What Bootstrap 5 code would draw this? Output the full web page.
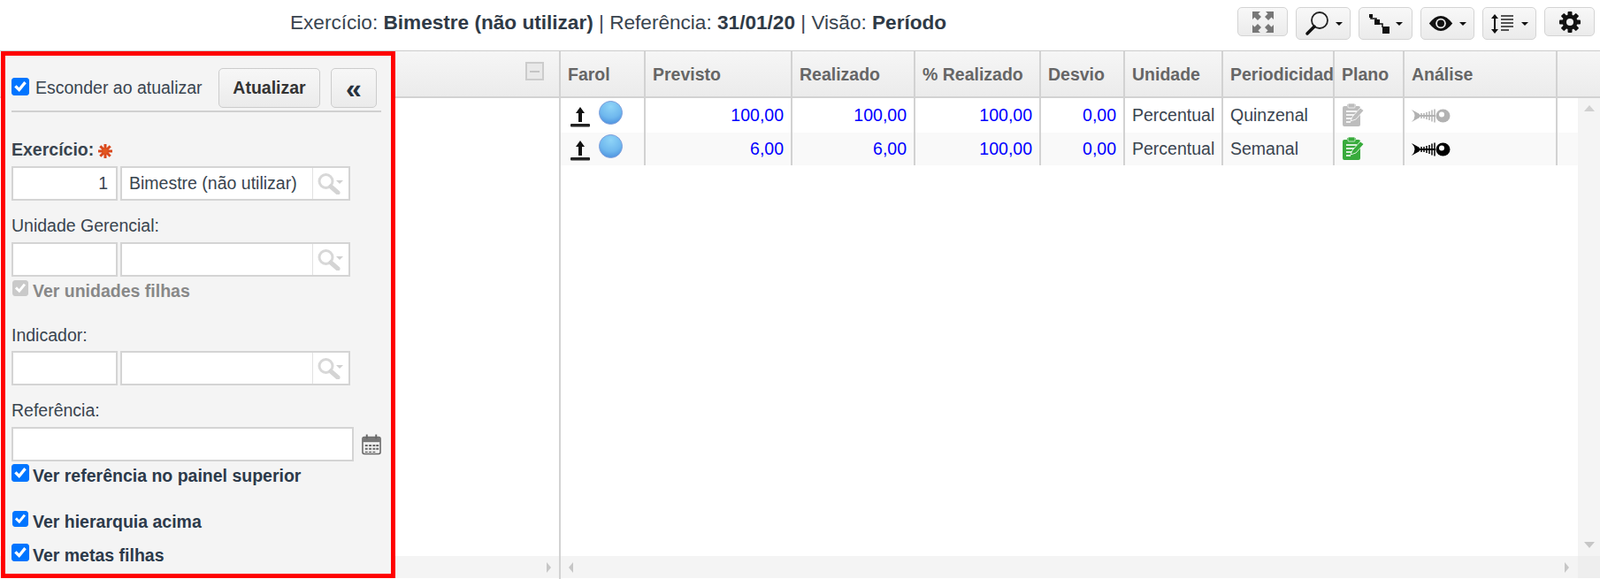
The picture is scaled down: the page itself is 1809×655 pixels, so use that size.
<!DOCTYPE html>
<html lang="pt">
<head>
<meta charset="utf-8">
<title>Painel</title>
<link rel="stylesheet" href="https://cdn.jsdelivr.net/npm/bootstrap@5.3.0/dist/css/bootstrap.min.css">
<style>
html,body{height:655px;overflow:hidden;margin:0;background:#fff}
body{font-family:"Liberation Sans",Arial,sans-serif;font-size:19.5px;color:#39444f;line-height:24px}
.topbar{height:57px;padding:8px 6px 0 328px}
.page-title{font-size:22.6px;line-height:36px}
.page-title b{color:#2f3a46}
.tools{gap:9px}
.tool-btn{height:33px;width:57px;padding:0;border:1px solid #d4d4d4;border-radius:5px;background:linear-gradient(#f8f8f8,#ebebeb);display:flex;align-items:center;justify-content:center;color:#111}
.tool-btn.tall{height:37px;width:61px}
.tool-btn.tall.wide{width:62px}
.tool-btn.dropdown-toggle::after{margin-left:7px;border-top:4px solid #111;border-left:4px solid transparent;border-right:4px solid transparent;border-bottom:0;vertical-align:middle}
.workspace{height:598px;position:relative;border-top:1px solid #ccc}
.tree-pane{width:634px;border-right:2px solid #d2d2d2}
.grid-pane{width:1175px}
.head-bar{height:53px;background:linear-gradient(#f6f6f6,#ebebeb);border-bottom:2px solid #d2d2d2}
.collapse-box{width:21px;height:21px;border:2px solid #ccc;background:#e9e9e9;margin:12px 17px 0 auto;display:flex;align-items:center;justify-content:center}
.collapse-box i{display:block;width:11px;height:2px;background:#c4c4c4}
.tree-body{flex:1}
.scroll-h{height:25px;background:#f4f4f4;margin-bottom:1px;display:flex;align-items:center}
.tree-scroll{justify-content:flex-end;padding-right:9px}
.grid-scroll{justify-content:space-between;padding:0 10px 0 9px;flex:1}
.scroll-corner{width:25px;height:25px;background:#eee;margin-bottom:1px}
.arrow-l,.arrow-r{display:block;width:0;height:0;border-top:6px solid transparent;border-bottom:6px solid transparent}
.arrow-l{border-right:5px solid #c6c6c6}
.arrow-r{border-left:5px solid #c6c6c6}
.grid-table{table-layout:fixed;margin:0;border-collapse:collapse}
.head-table{width:1175px}
.body-table{width:1150px}
.grid-table>*>tr>*{padding:0 8px;border:0;border-right:2px solid #d2d2d2;background:transparent;white-space:nowrap;overflow:visible;box-shadow:none}
.head-table th{height:51px;font-weight:700;color:#666;vertical-align:middle;font-size:19.5px}
.head-table th:last-child{border-right:0}
.body-table td{vertical-align:middle;color:#39444f}
.body-table tr.line-a td{height:39px;padding-bottom:2px}
.body-table tr.line-b td{height:37px;padding-bottom:2px;background:#f9f9f9}
.body-table td.num{text-align:right;color:#00f}
.body-table td.bare{border-right:0}
.c1{width:95px}.c2{width:166px}.c3{width:139px}.c4{width:142px}.c5{width:95px}.c6{width:111px}.c7{width:126px}.c8{width:79px}.c9{width:173px}
.cl-head{width:49px}.cl-body{width:24px}
.vscroll{width:25px;background:#f4f4f4;flex-direction:column;justify-content:space-between;padding:8px 0 9px}
.arrow-u,.arrow-d{display:block;width:0;height:0;margin-left:7px;border-left:6px solid transparent;border-right:6px solid transparent}
.arrow-u{border-bottom:7px solid #d0d0d0}
.arrow-d{border-top:7px solid #c6c6c6}
.farol-cell{display:flex;align-items:flex-start;gap:10px;margin-left:3px}
.farol-a{margin-top:7px}
.sphere{width:27px;height:27px;border-radius:50%;background:radial-gradient(circle at 50% 22%,#8fd4f7 0,#6fb8ee 55%,#3f82d8 100%);border:1px solid #7f9fdc}
.filter-panel{position:absolute;left:1px;top:0;width:446px;height:596px;border:5px solid #f00;background:#f4f4f4;padding:14px 11px 0 7px;z-index:5}
.filter-top{height:45px;padding-right:5px}
.filter-top .form-check-input{margin:-4px 7px 0 0}
.filter-top label{margin-top:-2px}
.act-btn{height:45px;width:115px;padding:0;font-size:19.5px;font-weight:700;color:#333;border:1px solid #ccc;border-radius:5px;background:linear-gradient(#f7f7f7,#ebebeb)}
.act-btn.arrows{width:52px;margin-left:12px;font-size:32px;line-height:38px;color:#27323e}
.filter-rule{height:2px;margin-top:3px;background:#d0d0d0}
.f-label{height:24px;margin-bottom:7px}
.ml-30{margin-top:30px}.ml-16{margin-top:16px}.ml-26{margin-top:26px}
.f-label.tight{margin-bottom:6px}
.f-label.ref-label{margin-bottom:7px}
.pair{gap:3px;height:39px}
.form-control.cod,.form-control.desc,.form-control.dt{height:39px;border:2px solid #d4d4d4;border-radius:0;background:#fff;font-size:19.5px;color:#39444f;padding:0 9px;box-shadow:none}
.form-control.cod{width:120px;flex:none;text-align:right}
.desc-wrap{width:260px;border:2px solid #d4d4d4;background:#fff;height:39px}
.form-control.desc{border:0;height:35px;flex:1;min-width:0;padding-left:8px}
.find-cell{width:41px;flex:none;border-left:1px solid #e2e2e2;padding-left:5px;display:flex;align-items:center}
.form-control.dt{width:387px;flex:none}
.date-row{gap:9px}
.check-line{height:24px;font-weight:700;color:#2c3a4a}
.check-line .form-check-input{margin:0 4px 0 0;flex:none}
.check-line.up .form-check-input{margin-top:-1px;align-self:flex-start}
.check-line.small-box .form-check-input{width:18px;height:18px;margin:0 5px 0 1px;align-self:flex-start}
.form-check-input{width:20px;height:20px;margin:0}
.form-check-input[type=checkbox]{border-radius:3px}
.form-check-input:checked{background-color:#0075ff;border-color:#0075ff}
.form-check-input:checked[type=checkbox]{--bs-form-check-bg-image:url("data:image/svg+xml,%3csvg xmlns='http://www.w3.org/2000/svg' viewBox='0 0 20 20'%3e%3cpath fill='none' stroke='%23fff' stroke-linecap='square' stroke-width='3.6' d='M5 10.500l3.500 3.500 6.500-8'/%3e%3c/svg%3e")}
.form-check-input:disabled{opacity:1;pointer-events:none}
.form-check-input:checked:disabled{background-color:#c9c9c9;border-color:#c9c9c9}
.check-off{color:#888}
.ck-4{margin-top:4px}.ck-a{margin-top:4px}.ck-b{margin-top:28px}.ck-c{margin-top:14px}
.req{margin-left:5px;vertical-align:-3px}
.text-plan-off{color:#bdbdbd}.text-plan-on{color:#38ab3c}.text-fish-off{color:#b2b2b2}.text-fish-on{color:#000}
</style>
</head>
<body>
<svg width="0" height="0" class="position-absolute">
<defs>
<symbol id="find" viewBox="0 0 30 24"><circle cx="9.500" cy="9" r="7.500" fill="none" stroke="#d8d8d8" stroke-width="3"/><path d="M15 15l8 7" stroke="#d4d4d4" stroke-width="5" stroke-linecap="round"/><path d="M21 8h8l-4 4z" fill="#d0d0d0"/></symbol>
<symbol id="arrowup" viewBox="0 0 22 24"><path d="M11 0l5 7h-3v10H9V7H6z" fill="#111"/><rect x="0" y="19" width="22" height="3.500" rx="1" fill="#222"/></symbol>
<symbol id="plan" viewBox="0 0 25 27"><path d="M3 4h3V2h10v2h3q2 0 2 2v19q0 2-2 2H3q-2 0-2-2V6q0-2 2-2z" fill="currentColor"/><rect x="7" y="1" width="8" height="5" rx="1" fill="currentColor" stroke="#fff" stroke-opacity=".7"/><path d="M5 10h12M5 14h9M5 18h6M5 22h5" stroke="#fff" stroke-opacity=".8" stroke-width="2"/><path d="M10 21l2-5L21 6l4 3-9 10z" fill="currentColor" stroke="#fff" stroke-opacity=".8"/></symbol>
<symbol id="fish" viewBox="0 0 44 18"><path d="M0 2q7 7 0 14l9-5V7z" fill="currentColor"/><path d="M7 9h20" stroke="currentColor" stroke-width="2"/><path d="M11 6v6M14 6v6M17 5v8M20 4v10M23 2.500v13M26 1.500v15" stroke="currentColor" stroke-width="1.500"/><ellipse cx="35.500" cy="9" rx="8" ry="7.500" fill="currentColor"/><circle cx="34" cy="7.500" r="3" fill="#fff"/></symbol>
</defs>
</svg>

<header class="topbar d-flex justify-content-between align-items-start">
  <div class="page-title">Exercício: <b>Bimestre (não utilizar)</b> | Referência: <b>31/01/20</b> | Visão: <b>Período</b></div>
  <div class="tools d-flex align-items-start">
    <button class="tool-btn" aria-label="Tela cheia"><svg width="24" height="24" viewBox="0 0 24 24" fill="#777"><path d="M0 0h9L6.500 2.500 10 6 6 10 2.500 6.500 0 9zM24 0v9l-2.500-2.500L18 10l-4-4 3.500-3.500L15 0zM0 24v-9l2.500 2.500L6 14l4 4-3.500 3.500L9 24zM24 24h-9l2.500-2.500L14 18l4-4 3.500 3.500L24 15z"/></svg></button>
    <button class="tool-btn tall wide dropdown-toggle" aria-label="Pesquisar"><svg width="28" height="30" viewBox="0 0 28 30"><circle cx="17" cy="11" r="9" fill="none" stroke="#222" stroke-width="1.800"/><path d="M11 18L3 26" stroke="#111" stroke-width="3.500" stroke-linecap="round"/></svg></button>
    <button class="tool-btn tall dropdown-toggle" aria-label="Hierarquia"><svg width="23" height="22" viewBox="0 0 23 22"><path d="M2 2v3h6v6h7v4" fill="none" stroke="#111" stroke-width="1.500"/><rect x="0" y="0" width="4" height="4" fill="#111"/><rect x="6" y="6" width="6" height="6" fill="#111"/><rect x="15" y="14" width="8" height="8" fill="#111"/></svg></button>
    <button class="tool-btn tall dropdown-toggle" aria-label="Visão"><svg width="28" height="19" viewBox="0 0 26 18"><path d="M0.500 9Q13-7 25.500 9 13 25 0.500 9z" fill="#111"/><circle cx="13" cy="9" r="5.500" fill="#eee"/><circle cx="13" cy="9" r="3.800" fill="#111"/></svg></button>
    <button class="tool-btn tall dropdown-toggle" aria-label="Altura"><svg width="28" height="24" viewBox="0 0 28 24"><path d="M5 1l4 5H6v12h3l-4 5-4-5h3V6H1z" fill="#111"/><path d="M12 3h14M12 7h14M12 11h14M12 15h14M12 19h9" stroke="#222" stroke-width="1.500"/></svg></button>
    <button class="tool-btn" aria-label="Configurações"><svg width="24" height="24" viewBox="0 0 24 24"><g fill="#111"><circle cx="12" cy="12" r="8.500"/><rect x="9.500" y="0" width="5" height="24" rx="1"/><rect x="9.500" y="0" width="5" height="24" rx="1" transform="rotate(45 12 12)"/><rect x="9.500" y="0" width="5" height="24" rx="1" transform="rotate(90 12 12)"/><rect x="9.500" y="0" width="5" height="24" rx="1" transform="rotate(135 12 12)"/></g><circle cx="12" cy="12" r="4" fill="#eee"/></svg></button>
  </div>
</header>

<main class="workspace d-flex">
  <aside class="filter-panel">
    <div class="filter-top d-flex align-items-center">
      <input class="form-check-input" type="checkbox" checked id="hide" aria-label="Esconder ao atualizar">
      <label for="hide">Esconder ao atualizar</label>
      <button class="btn act-btn ms-auto">Atualizar</button>
      <button class="btn act-btn arrows">«</button>
    </div>
    <div class="filter-rule"></div>

    <div class="f-label ml-30"><b>Exercício:</b><svg class="req" width="16" height="16" viewBox="0 0 16 16"><g stroke="#d9481c" stroke-width="3"><path d="M8 0v16M0 8h16M2.300 2.300l11.400 11.400M13.700 2.300L2.300 13.700"/></g><circle cx="8" cy="8" r="3" fill="#e2571f"/></svg></div>
    <div class="pair d-flex">
      <input class="form-control cod" value="1" aria-label="Código do exercício">
      <div class="desc-wrap d-flex"><input class="form-control desc" value="Bimestre (não utilizar)" aria-label="Exercício"><div class="find-cell"><svg width="30" height="24"><use href="#find"/></svg></div></div>
    </div>

    <div class="f-label ml-16">Unidade Gerencial:</div>
    <div class="pair d-flex">
      <input class="form-control cod" aria-label="Código da unidade">
      <div class="desc-wrap d-flex"><input class="form-control desc" aria-label="Unidade"><div class="find-cell"><svg width="30" height="24"><use href="#find"/></svg></div></div>
    </div>
    <div class="check-line check-off small-box ck-4 d-flex align-items-center">
      <input class="form-check-input" type="checkbox" checked disabled id="c-un"><label for="c-un">Ver unidades filhas</label>
    </div>

    <div class="f-label tight ml-26">Indicador:</div>
    <div class="pair d-flex">
      <input class="form-control cod" aria-label="Código do indicador">
      <div class="desc-wrap d-flex"><input class="form-control desc" aria-label="Indicador"><div class="find-cell"><svg width="30" height="24"><use href="#find"/></svg></div></div>
    </div>

    <div class="f-label ref-label ml-16">Referência:</div>
    <div class="date-row d-flex align-items-center">
      <input class="form-control dt" aria-label="Referência">
      <svg width="23" height="24" viewBox="0 0 23 24"><rect x="1" y="3" width="21" height="20" rx="2" fill="#f0f0f0" stroke="#666" stroke-width="1.600"/><rect x="1" y="3" width="21" height="6" fill="#777"/><path d="M6 0v5M17 0v5" stroke="#666" stroke-width="2"/><path d="M4 12h3v2H4zM8.500 12h3v2h-3zM13 12h3v2h-3zM17 12h3v2h-3zM4 16h3v2H4zM8.500 16h3v2h-3zM13 16h3v2h-3zM17 16h3v2h-3zM4 20h3v1.500H4zM8.500 20h3v1.500h-3zM13 20h3v1.500h-3z" fill="#666"/></svg>
    </div>
    <div class="check-line up ck-a d-flex align-items-center">
      <input class="form-check-input" type="checkbox" checked id="c-ref"><label for="c-ref">Ver referência no painel superior</label>
    </div>
    <div class="check-line small-box ck-b d-flex align-items-center">
      <input class="form-check-input" type="checkbox" checked id="c-hie"><label for="c-hie">Ver hierarquia acima</label>
    </div>
    <div class="check-line up ck-c d-flex align-items-center">
      <input class="form-check-input" type="checkbox" checked id="c-met"><label for="c-met">Ver metas filhas</label>
    </div>
  </aside>

  <section class="tree-pane d-flex flex-column flex-shrink-0">
    <div class="head-bar d-flex"><div class="collapse-box"><i></i></div></div>
    <div class="tree-body"></div>
    <div class="scroll-h tree-scroll"><span class="arrow-r"></span></div>
  </section>

  <section class="grid-pane d-flex flex-column">
    <div class="head-bar">
      <table class="table grid-table head-table">
        <colgroup><col class="c1"><col class="c2"><col class="c3"><col class="c4"><col class="c5"><col class="c6"><col class="c7"><col class="c8"><col class="c9"><col class="cl-head"></colgroup>
        <thead><tr><th>Farol</th><th>Previsto</th><th>Realizado</th><th>% Realizado</th><th>Desvio</th><th>Unidade</th><th>Periodicidad</th><th>Plano</th><th>Análise</th><th></th></tr></thead>
      </table>
    </div>
    <div class="d-flex flex-grow-1">
      <div class="flex-grow-1">
        <table class="table grid-table body-table">
          <colgroup><col class="c1"><col class="c2"><col class="c3"><col class="c4"><col class="c5"><col class="c6"><col class="c7"><col class="c8"><col class="c9"><col class="cl-body"></colgroup>
          <tbody>
            <tr class="line-a">
              <td><div class="farol-cell"><svg class="farol-a" width="22" height="24"><use href="#arrowup"/></svg><div class="sphere"></div></div></td>
              <td class="num">100,00</td><td class="num">100,00</td><td class="num">100,00</td><td class="num">0,00</td>
              <td>Percentual</td><td>Quinzenal</td>
              <td><svg width="25" height="27" class="text-plan-off"><use href="#plan"/></svg></td>
              <td><svg width="44" height="18" class="text-fish-off"><use href="#fish"/></svg></td>
              <td class="bare"></td>
            </tr>
            <tr class="line-b">
              <td><div class="farol-cell"><svg class="farol-a" width="22" height="24"><use href="#arrowup"/></svg><div class="sphere"></div></div></td>
              <td class="num">6,00</td><td class="num">6,00</td><td class="num">100,00</td><td class="num">0,00</td>
              <td>Percentual</td><td>Semanal</td>
              <td><svg width="25" height="27" class="text-plan-on"><use href="#plan"/></svg></td>
              <td><svg width="44" height="18" class="text-fish-on"><use href="#fish"/></svg></td>
              <td class="bare"></td>
            </tr>
          </tbody>
        </table>
      </div>
      <div class="vscroll d-flex"><span class="arrow-u"></span><span class="arrow-d"></span></div>
    </div>
    <div class="d-flex">
      <div class="scroll-h grid-scroll"><span class="arrow-l"></span><span class="arrow-r"></span></div>
      <div class="scroll-corner"></div>
    </div>
  </section>
</main>
<script src="https://cdn.jsdelivr.net/npm/bootstrap@5.3.0/dist/js/bootstrap.bundle.min.js"></script>
</body>
</html>
